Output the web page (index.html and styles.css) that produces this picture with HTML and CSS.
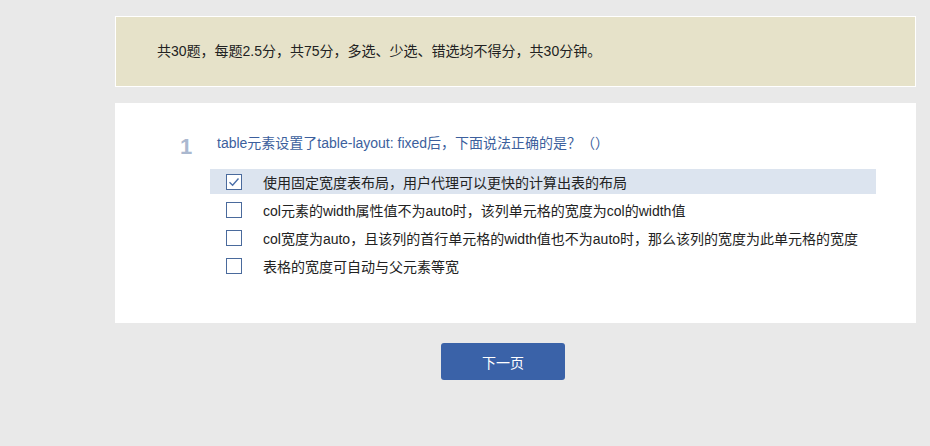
FILE: index.html
```html
<!DOCTYPE html>
<html lang="zh-CN">
<head>
    <meta charset="UTF-8">
    <title>在线测试</title>
    <link rel="stylesheet" href="styles.css">
</head>
<body>
    <div class="wrap">
        <div class="notice">共30题，每题2.5分，共75分，多选、少选、错选均不得分，共30分钟。</div>
        <div class="question">
            <div class="q-head">
                <span class="q-num">1</span>
                <span class="q-title">table元素设置了table-layout: fixed后，下面说法正确的是？（）</span>
            </div>
            <ul class="options">
                <li class="checked"><span class="box"><svg width="12" height="10" viewBox="0 0 12 10"><path d="M1.5 5.2 L4.6 8.2 L10.5 1.5" fill="none" stroke="#4a6ea8" stroke-width="1.4"/></svg></span>使用固定宽度表布局，用户代理可以更快的计算出表的布局</li>
                <li><span class="box"></span>col元素的width属性值不为auto时，该列单元格的宽度为col的width值</li>
                <li><span class="box"></span>col宽度为auto，且该列的首行单元格的width值也不为auto时，那么该列的宽度为此单元格的宽度</li>
                <li><span class="box"></span>表格的宽度可自动与父元素等宽</li>
            </ul>
        </div>
        <div class="actions">
            <button class="next">下一页</button>
        </div>
    </div>
</body>
</html>
```

FILE: styles.css
```css
body {
    margin: 0;
    background-color: #e9e9e9;
    font-family: 'Liberation Sans', Arial, 'Noto Sans CJK SC', sans-serif;
    font-size: 14px;
    color: #222;
}
.wrap {
    width: 801px;
    margin-left: 115px;
    padding-top: 16px;
}
.notice {
    box-sizing: border-box;
    height: 71px;
    background-color: #e6e2c9;
    border: 1px solid #fff;
    padding: 0 0 0 41px;
    line-height: 69px;
}
.question {
    background-color: #fff;
    margin-top: 16px;
    height: 220px;
    box-sizing: border-box;
    padding: 30px 40px 0 65px;
}
.q-head {
    display: flex;
    align-items: flex-start;
}
.q-num {
    width: 37px;
    font-size: 22px;
    font-weight: bold;
    color: #aab8cf;
    line-height: 28px;
    padding-top: 0;
}
.q-title {
    color: #3c5f9d;
    line-height: 20px;
}
.options {
    list-style-type: none;
    margin: 8px 0 0 30px;
    padding: 0;
}
.options li {
    display: flex;
    align-items: center;
    height: 25px;
    margin-bottom: 3px;
    padding-left: 16px;
}
.options li.checked {
    background-color: #dce4ef;
}
.box {
    box-sizing: border-box;
    width: 16px;
    height: 16px;
    border: 1px solid #4a6a9c;
    background-color: #fff;
    margin-right: 21px;
    display: flex;
    align-items: center;
    justify-content: center;
}
.actions {
    display: flex;
    justify-content: center;
    margin-top: 20px;
    padding-right: 25px;
}
.next {
    width: 124px;
    height: 37px;
    background-color: #3a62a8;
    border: none;
    border-radius: 3px;
    color: #fff;
    font-family: 'Liberation Sans', 'Noto Sans CJK SC', sans-serif;
    font-size: 14px;
    cursor: pointer;
}
```
